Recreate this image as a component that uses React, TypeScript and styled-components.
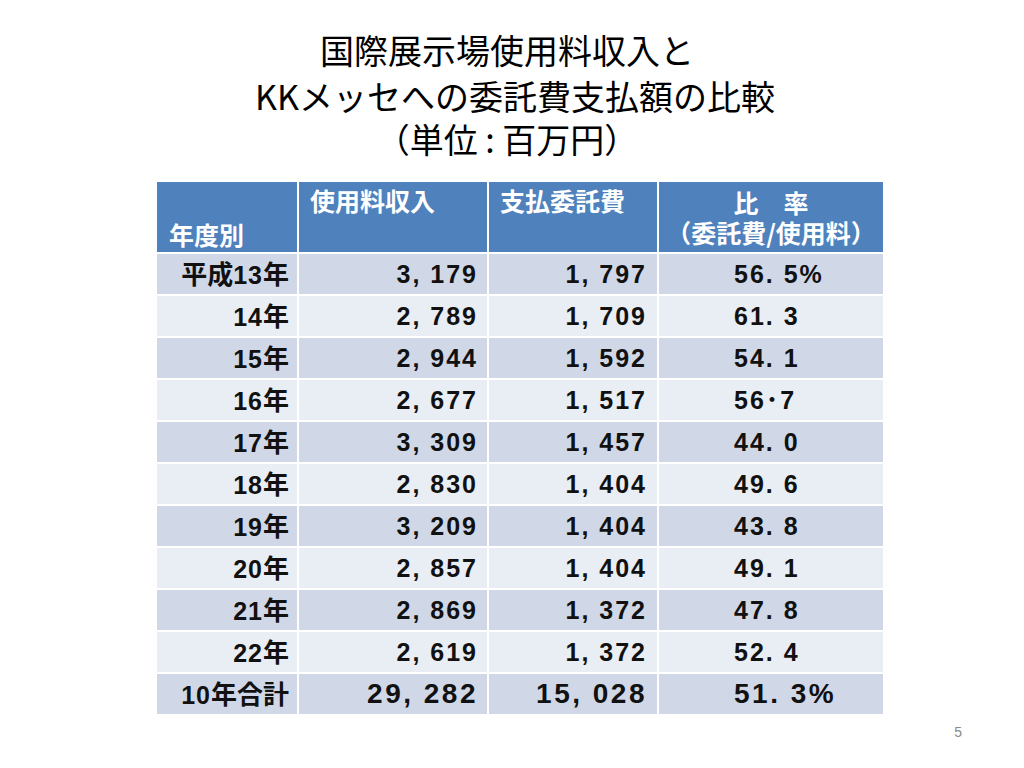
import React from "react";
import styled, { createGlobalStyle } from "styled-components";

const Global = createGlobalStyle`
  html, body { margin: 0; padding: 0; background: #ffffff; }
  body { font-family: "Noto Sans CJK JP", "Liberation Sans", sans-serif; }
`;

const Page = styled.div`
  width: 1024px;
  height: 768px;
  display: flex;
  flex-direction: column;
  background: #ffffff;
  overflow: hidden;
`;

const Title = styled.h1`
  margin: 27px 0 0 0;
  font-family: "Noto Sans CJK JP", sans-serif;
  font-weight: 400;
  font-size: 34px;
  color: #000000;
  text-align: center;
  display: flex;
  flex-direction: column;
  align-items: center;
`;

const TitleLine = styled.span<{ $h: number; $dx?: number }>`
  display: block;
  height: ${(p) => p.$h}px;
  line-height: ${(p) => p.$h}px;
  margin-left: ${(p) => (p.$dx ?? 0) * 2}px;
  white-space: nowrap;
`;

const Table = styled.table`
  margin: 21px 0 0 155px;
  border-collapse: separate;
  border-spacing: 2px;
  table-layout: fixed;
  width: 730px;
`;

const HeadCell = styled.th<{ $align: "top" | "bottom" | "middle"; $center?: boolean }>`
  background: #4f81bd;
  color: #ffffff;
  font-family: "Noto Sans CJK JP", sans-serif;
  font-weight: 700;
  font-size: 25px;
  line-height: 30px;
  height: 70px;
  padding: ${(p) => (p.$align === "top" ? "3px 0 0 11px" : p.$align === "bottom" ? "0 0 3px 12px" : "3px 0 4px 0")};
  vertical-align: ${(p) => p.$align};
  text-align: ${(p) => (p.$center ? "center" : "left")};
  box-sizing: border-box;
  white-space: nowrap;
  overflow: hidden;
`;

const Row = styled.tr<{ $odd: boolean }>`
  background: ${(p) => (p.$odd ? "#d0d8e8" : "#e9edf4")};
`;

const Cell = styled.td<{ $pad: string; $big?: boolean; $left?: boolean }>`
  height: 40px;
  max-height: 40px;
  padding: ${(p) => p.$pad};
  box-sizing: border-box;
  text-align: ${(p) => (p.$left ? "left" : "right")};
  vertical-align: middle;
  font-family: "Liberation Sans", "Noto Sans CJK JP", sans-serif;
  font-weight: 700;
  font-size: ${(p) => (p.$big ? "28px" : "25px")};
  letter-spacing: ${(p) => (p.$big ? "2.5px" : "2px")};
  line-height: 24px;
  color: #111111;
  white-space: nowrap;
  overflow: hidden;
`;

const YearCell = styled(Cell)`
  font-size: 25px;
  letter-spacing: 1px;
`;

const Kanji = styled.span`
  font-family: "Noto Sans CJK JP", sans-serif;
  font-size: 26px;
  letter-spacing: 0;
  line-height: 24px;
`;

const Footer = styled.div`
  margin-top: auto;
  display: flex;
  justify-content: flex-end;
  padding: 0 62px 28px 0;
  font-family: "Liberation Sans", sans-serif;
  font-size: 14px;
  color: #8a8a8a;
`;

type R = { y: string; a: string; b: string; c: string };

const rows: R[] = [
  { y: "平成13年", a: "3, 179", b: "1, 797", c: "56. 5%" },
  { y: "14年", a: "2, 789", b: "1, 709", c: "61. 3" },
  { y: "15年", a: "2, 944", b: "1, 592", c: "54. 1" },
  { y: "16年", a: "2, 677", b: "1, 517", c: "56･7" },
  { y: "17年", a: "3, 309", b: "1, 457", c: "44. 0" },
  { y: "18年", a: "2, 830", b: "1, 404", c: "49. 6" },
  { y: "19年", a: "3, 209", b: "1, 404", c: "43. 8" },
  { y: "20年", a: "2, 857", b: "1, 404", c: "49. 1" },
  { y: "21年", a: "2, 869", b: "1, 372", c: "47. 8" },
  { y: "22年", a: "2, 619", b: "1, 372", c: "52. 4" },
  { y: "10年合計", a: "29, 282", b: "15, 028", c: "51. 3%" },
];

function renderYear(s: string) {
  const parts = s.split(/(\d+)/).filter(Boolean);
  return parts.map((p, i) => (/^\d+$/.test(p) ? <span key={i}>{p}</span> : <Kanji key={i}>{p}</Kanji>));
}

export default function App() {
  return (
    <Page>
      <Global />
      <Title>
        <TitleLine $h={46} $dx={-5}>国際展示場使用料収入と</TitleLine>
        <TitleLine $h={46} $dx={3}>KKメッセへの委託費支払額の比較</TitleLine>
        <TitleLine $h={40} $dx={-5}>（単位 : 百万円）</TitleLine>
      </Title>
      <Table>
        <colgroup>
          <col style={{ width: 140 }} />
          <col style={{ width: 188 }} />
          <col style={{ width: 168 }} />
          <col style={{ width: 224 }} />
        </colgroup>
        <thead>
          <tr>
            <HeadCell $align="bottom">年度別</HeadCell>
            <HeadCell $align="top">使用料収入</HeadCell>
            <HeadCell $align="top">支払委託費</HeadCell>
            <HeadCell $align="middle" $center>
              比　率
              <br />
              （委託費/使用料）
            </HeadCell>
          </tr>
        </thead>
        <tbody>
          {rows.map((r, i) => {
            const big = i === rows.length - 1;
            return (
              <Row key={i} $odd={i % 2 === 0}>
                <YearCell $pad="0 8px 0 0">{renderYear(r.y)}</YearCell>
                <Cell $pad="0 9px 0 0" $big={big}>{r.a}</Cell>
                <Cell $pad="0 10px 0 0" $big={big}>{r.b}</Cell>
                <Cell $pad="0 0 0 75px" $big={big} $left>{r.c}</Cell>
              </Row>
            );
          })}
        </tbody>
      </Table>
      <Footer>5</Footer>
    </Page>
  );
}
